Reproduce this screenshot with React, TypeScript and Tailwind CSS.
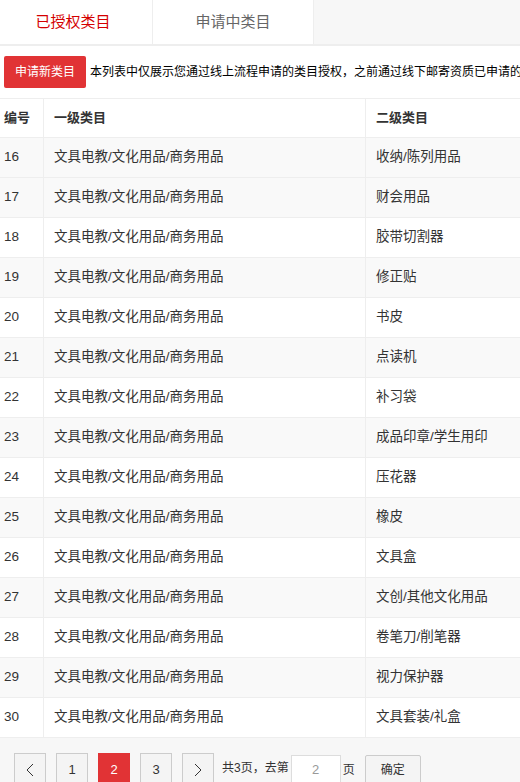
import React from 'react';

const rows: [number, string][] = [
  [16, '收纳/陈列用品'],
  [17, '财会用品'],
  [18, '胶带切割器'],
  [19, '修正贴'],
  [20, '书皮'],
  [21, '点读机'],
  [22, '补习袋'],
  [23, '成品印章/学生用印'],
  [24, '压花器'],
  [25, '橡皮'],
  [26, '文具盒'],
  [27, '文创/其他文化用品'],
  [28, '卷笔刀/削笔器'],
  [29, '视力保护器'],
  [30, '文具套装/礼盒'],
];

const font = { fontFamily: '"Liberation Sans", "Noto Sans CJK SC", sans-serif' };

const Chevron = ({ dir }: { dir: 'left' | 'right' }) => (
  <svg width="8" height="14" viewBox="0 0 8 14" fill="none" stroke="#333" strokeWidth="1">
    {dir === 'left' ? <polyline points="7,1 1,7 7,13" /> : <polyline points="1,1 7,7 1,13" />}
  </svg>
);

const PageBtn = ({ children, active }: { children: React.ReactNode; active?: boolean }) => (
  <div
    className={
      active
        ? 'w-[32px] h-[34px] flex items-center justify-center bg-[#e13335] text-white text-[13px] shrink-0'
        : 'w-[32px] h-[34px] flex items-center justify-center bg-[#f4f4f4] border border-[#cccccc] text-[#333] text-[13px] shrink-0'
    }
  >
    {children}
  </div>
);

const App = () => {
  return (
    <div className="w-[520px] h-[782px] overflow-hidden bg-white" style={font}>
      {/* Tabs */}
      <div className="flex h-[46px] border-b-2 border-[#eeeeee] bg-[#f7f7f7]">
        <div className="w-[153px] bg-white border-r border-[#eeeeee] flex items-center justify-center text-[15px] text-[#d40000] pr-[6px]">
          已授权类目
        </div>
        <div className="w-[161px] bg-white border-r border-[#eeeeee] flex items-center justify-center text-[15px] text-[#666666]">
          申请中类目
        </div>
      </div>

      {/* Toolbar */}
      <div className="flex items-center pl-[4px] pt-[10px] pb-[10px] whitespace-nowrap">
        <div className="w-[82px] h-[32px] rounded-[2px] bg-[#e13335] text-white text-[12px] flex items-center justify-center shrink-0">
          申请新类目
        </div>
        <span className="ml-[4px] text-[12px] text-black">
          本列表中仅展示您通过线上流程申请的类目授权，之前通过线下邮寄资质已申请的类目不在此列表中展示
        </span>
      </div>

      {/* Table */}
      <div className="w-[800px] border-t border-[#eeeeee]">
        <div className="flex h-[39px] border-b border-[#eeeeee] text-[13px] font-bold text-[#333]">
          <div className="w-[44px] border-r border-[#eeeeee] flex items-center pl-[4px]">编号</div>
          <div className="w-[322px] border-r border-[#eeeeee] flex items-center pl-[10px]">一级类目</div>
          <div className="flex-1 flex items-center pl-[10px]">二级类目</div>
        </div>
        {rows.map(([id, name]) => (
          <div
            key={id}
            className={
              id % 2 === 1 || id === 16
                ? 'flex h-[40px] border-b border-[#eeeeee] bg-[#f9f9f9] text-[13.5px] text-[#333]'
                : 'flex h-[40px] border-b border-[#eeeeee] bg-white text-[13.5px] text-[#333]'
            }
          >
            <div className="w-[44px] border-r border-[#eeeeee] flex items-center pl-[4px]">{id}</div>
            <div className="w-[322px] border-r border-[#eeeeee] flex items-center pl-[10px]">
              文具电教/文化用品/商务用品
            </div>
            <div className="flex-1 flex items-center pl-[10px]">{name}</div>
          </div>
        ))}
      </div>

      {/* Pagination */}
      <div className="flex items-start gap-[10px] bg-[#f7f7f7] h-[60px] pl-[14px] pt-[15px] whitespace-nowrap">
        <PageBtn>
          <Chevron dir="left" />
        </PageBtn>
        <PageBtn>1</PageBtn>
        <PageBtn active>2</PageBtn>
        <PageBtn>3</PageBtn>
        <PageBtn>
          <Chevron dir="right" />
        </PageBtn>
        <div className="flex items-start -ml-[2px]">
          <span className="h-[30px] flex items-center text-[12px] text-[#333]">共3页，去第</span>
          <div className="ml-[2px] mt-[2px] w-[50px] h-[30px] bg-white border border-[#dddddd] flex items-center justify-center text-[13px] text-[#999]">
            2
          </div>
          <span className="ml-[2px] h-[30px] mt-[2px] flex items-center text-[12px] text-[#333]">页</span>
          <div className="ml-[10px] mt-[2px] w-[56px] h-[30px] rounded-[2px] bg-[#f4f4f4] border border-[#cccccc] flex items-center justify-center text-[12px] text-[#333]">
            确定
          </div>
        </div>
      </div>
    </div>
  );
};

export default App;
